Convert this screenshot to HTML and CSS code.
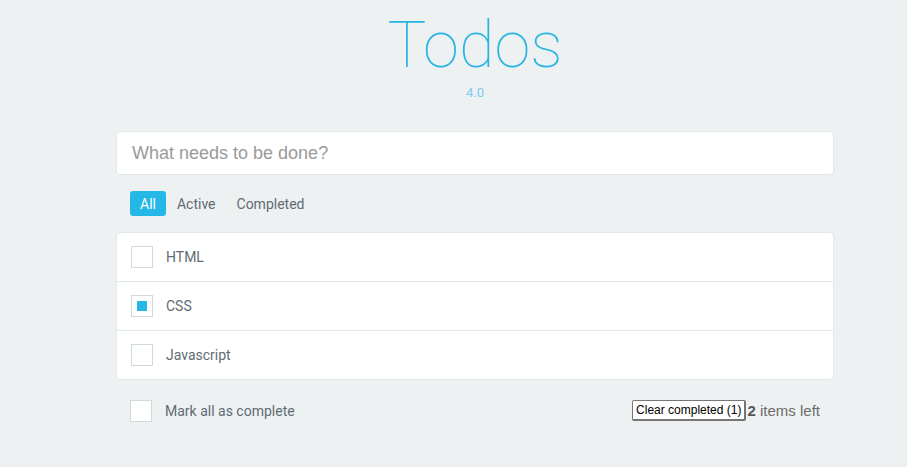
FILE: index.html
```html
<html>
	<head>
		<title>Todos</title>
		<link rel="stylesheet" href="styles.css">
	</head>
	<body>
		<div class="app">
			<div class="header">
				<h1>Todos</h1>
				<div class="version">4.0</div>
			</div>

			<input class="new-todo" type="text" placeholder="What needs to be done?">

			<div class="filters">
				<a class="filter selected">All</a>
				<a class="filter">Active</a>
				<a class="filter">Completed</a>
			</div>

			<ul class="todo-list">
				<li class="todo">
					<span class="check"></span>
					<span class="label">HTML</span>
				</li>
				<li class="todo done">
					<span class="check"></span>
					<span class="label">CSS</span>
				</li>
				<li class="todo">
					<span class="check"></span>
					<span class="label">Javascript</span>
				</li>
			</ul>

			<div class="footer">
				<div class="mark-all">
					<span class="check"></span>
					<span class="label">Mark all as complete</span>
				</div>
				<div class="footer-right">
					<button class="clear">Clear completed (1)</button>
					<span class="count"><b>2</b> items left</span>
				</div>
			</div>
		</div>
	</body>
</html>
```

FILE: styles.css
```css
body
{
	margin: 0;
	padding: 0 0 0 43px;
	background: #eef1f2;
	font-family: Roboto, "Liberation Sans", sans-serif;
	color: #5f6b73;
}

.app
{
	width: 718px;
	margin: 0 auto;
}

.header
{
	text-align: center;
	height: 131px;
}
.header h1
{
	margin: 0;
	padding-top: 7px;
	font-size: 65px;
	font-weight: 100;
	line-height: 76px;
	color: #29b5e4;
}
.version
{
	margin-top: 2px;
	font-size: 13px;
	font-weight: 400;
	color: #7ccbee;
}

.new-todo
{
	display: block;
	width: 100%;
	height: 44px;
	padding: 0 15px;
	border: 1px solid #e1e7ea;
	border-radius: 4px;
	background: #ffffff;
	font-family: "Liberation Sans", Arial, sans-serif;
	font-size: 18px;
	box-sizing: border-box;
	outline: none;
}
.new-todo::placeholder
{
	color: #9a9a9a;
}

.filters
{
	display: flex;
	gap: 1px;
	margin: 16px 0 16px 14px;
}
.filter
{
	height: 25px;
	line-height: 26px;
	padding: 0 10px;
	border-radius: 3px;
	font-size: 14px;
	color: #5f6b73;
}
.filter.selected
{
	background: #25b7e6;
	color: #ffffff;
}

.todo-list
{
	list-style: none;
	margin: 0;
	padding: 0;
	background: #ffffff;
	border: 1px solid #e3e8ea;
	border-radius: 4px;
}
.todo
{
	display: flex;
	align-items: center;
	height: 48px;
	padding-left: 14px;
	border-top: 1px solid #e3e8ea;
}
.todo:first-child
{
	border-top: none;
}

.check
{
	position: relative;
	width: 20px;
	height: 20px;
	border: 1px solid #cfdadd;
	background: #ffffff;
	flex-shrink: 0;
}
.todo.done .check::after
{
	content: "";
	position: absolute;
	left: 5px;
	top: 5px;
	width: 10px;
	height: 10px;
	background: #25b7e6;
}
.label
{
	margin-left: 13px;
	font-size: 14px;
	color: #5f6b73;
}

.footer
{
	display: flex;
	justify-content: space-between;
	align-items: center;
	margin-top: 20px;
	padding: 0 14px;
}
.mark-all
{
	display: flex;
	align-items: center;
}
.mark-all .label
{
	margin-left: 13px;
}
.footer-right
{
	display: flex;
	align-items: center;
	margin-top: -2px;
}
.clear
{
	height: 21px;
	padding: 0 3px;
	font-family: "Liberation Sans", Arial, sans-serif;
	font-size: 12px;
	color: #000000;
	background: #ffffff;
	border: 1px solid #767676;
	border-bottom-width: 2px;
	border-right-width: 2px;
	border-radius: 2px;
}
.count
{
	margin-left: 1px;
	font-family: "Liberation Sans", Arial, sans-serif;
	font-size: 15px;
	color: #6b6b6b;
}
.count b
{
	color: #555555;
}
```
